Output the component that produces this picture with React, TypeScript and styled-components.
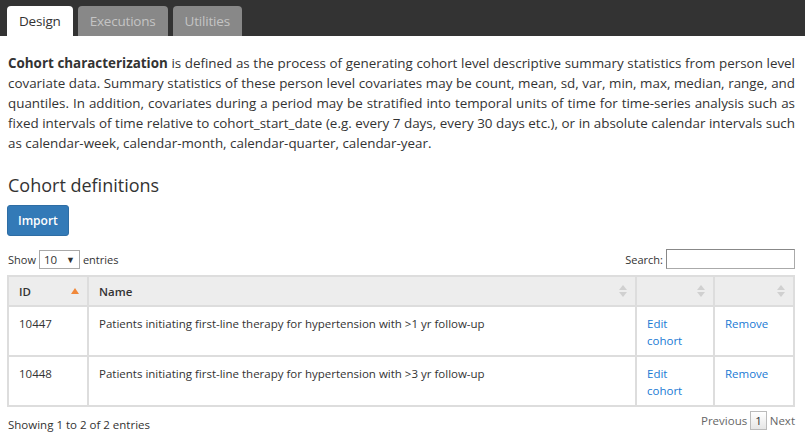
import React from 'react';
import styled, { createGlobalStyle } from 'styled-components';

const Global = createGlobalStyle`
  body {
    margin: 0;
    font-family: "Open Sans", "Noto Sans", sans-serif;
    color: #333;
    background: #fff;
  }
`

const TabBar = styled.div`
  background: #333;
  height: 36px;
  display: flex;
  align-items: flex-end;
  gap: 5px;
  padding-left: 7px;
`

const Tab = styled.div<{ $active?: boolean }>`
  height: 30px;
  padding: 0 12px;
  display: flex;
  align-items: center;
  border-radius: 4px 4px 0 0;
  font-size: 13.5px;
  letter-spacing: -0.2px;
  background: ${p => (p.$active ? '#fff' : '#888')};
  color: ${p => (p.$active ? '#333' : '#c4c4c4')};
`

const Content = styled.div`
  padding: 0 10px 0 8px;
`

const Intro = styled.p`
  margin: 17px 0 0;
  font-size: 13.4px;
  line-height: 20px;
  text-align: justify;
  color: #333;
`

const Heading = styled.h3`
  margin: 21px 0 9px;
  font-size: 18px;
  font-weight: 400;
  line-height: 22px;
`

const ImportButton = styled.button`
  font-family: inherit;
  background: #337ab7;
  border: 1px solid #2e6da4;
  color: #fff;
  font-size: 12px;
  font-weight: 600;
  height: 31px;
  padding: 0 10px;
  border-radius: 3px;
  margin-left: -1px;
`

const Controls = styled.div`
  display: flex;
  justify-content: space-between;
  align-items: center;
  margin-top: 13px;
  font-size: 11px;
`

const Inline = styled.label`
  display: flex;
  align-items: center;
  gap: 3px;
`

const FakeSelect = styled.div`
  width: 41px;
  height: 19px;
  border: 1px solid #a9a9a9;
  display: flex;
  align-items: center;
  justify-content: space-between;
  padding: 0 4px;
  box-sizing: border-box;
  font-size: 11.5px;

  span:last-child {
    font-size: 9px;
  }
`

const SearchBox = styled.div`
  width: 129px;
  height: 20px;
  box-sizing: border-box;
  border: 1px solid #aaa;
  border-top-color: #888;
  border-left-color: #888;
`

const Table = styled.table`
  width: calc(100% + 1px);
  table-layout: fixed;
  border-collapse: collapse;
  margin-top: 6px;
  font-size: 11.5px;
  border: 2px solid #ddd;
  margin-left: -1px;

  th, td {
    border: 2px solid #ddd;
    text-align: left;
    vertical-align: top;
  }
`

const Th = styled.th`
  position: relative;
  background: #ededed;
  font-weight: 600;
  height: 28px;
  padding: 0 10px;
  vertical-align: middle !important;
`

const Td = styled.td`
  height: 50px;
  padding: 8px 10px 0;
  line-height: 17px;
  box-sizing: border-box;
`

const Link = styled.a`
  color: #1a7ad4;
  text-decoration: none;
`

const SortIcon = styled.span`
  position: absolute;
  right: 8px;
  top: 50%;
  transform: translateY(-50%);
  display: flex;
`

const Footer = styled.div`
  display: flex;
  justify-content: space-between;
  align-items: center;
  font-size: 11.5px;
  margin-top: 10px;
`

const Pager = styled.div`
  display: flex;
  align-items: center;
  gap: 3px;
  color: #666;
  margin-top: -9px;
`

const PageNum = styled.span`
  border: 1px solid #bbb;
  background: linear-gradient(#fff, #e6e6e6);
  padding: 0 4px;
  line-height: 17px;
  color: #333;
`

const Sort = ({ active }: { active?: boolean }) => (
  <SortIcon>
    {active ? (
      <svg width="8" height="8" viewBox="0 0 8 8">
        <path d="M0 7 L4 1 L8 7 Z" fill="#f0883a" />
      </svg>
    ) : (
      <svg width="8" height="14" viewBox="0 0 8 14">
        <path d="M0 6 L4 1 L8 6 Z" fill="#d0d0d0" />
        <path d="M0 8 L4 13 L8 8 Z" fill="#d0d0d0" />
      </svg>
    )}
  </SortIcon>
)

type Row = { id: number; name: string }

const rows: Row[] = [
  { id: 10447, name: 'Patients initiating first-line therapy for hypertension with >1 yr follow-up' },
  { id: 10448, name: 'Patients initiating first-line therapy for hypertension with >3 yr follow-up' },
]

const App: React.FC = () => {
  return (
    <React.Fragment>
      <Global />
      <TabBar>
        <Tab $active>Design</Tab>
        <Tab>Executions</Tab>
        <Tab>Utilities</Tab>
      </TabBar>
      <Content>
        <Intro>
          <b>Cohort characterization</b> is defined as the process of generating cohort level descriptive summary
          statistics from person level covariate data. Summary statistics of these person level covariates may be
          count, mean, sd, var, min, max, median, range, and quantiles. In addition, covariates during a period may
          be stratified into temporal units of time for time-series analysis such as fixed intervals of time relative
          to cohort_start_date (e.g. every 7 days, every 30 days etc.), or in absolute calendar intervals such as
          calendar-week, calendar-month, calendar-quarter, calendar-year.
        </Intro>
        <Heading>Cohort definitions</Heading>
        <ImportButton>Import</ImportButton>
        <Controls>
          <Inline>
            Show
            <FakeSelect>
              <span>10</span>
              <span>▼</span>
            </FakeSelect>
            entries
          </Inline>
          <Inline>
            Search:
            <SearchBox />
          </Inline>
        </Controls>
        <Table>
          <colgroup>
            <col style={{ width: 80 }} />
            <col />
            <col style={{ width: 78 }} />
            <col style={{ width: 80 }} />
          </colgroup>
          <thead>
            <tr>
              <Th>ID<Sort active /></Th>
              <Th>Name<Sort /></Th>
              <Th><Sort /></Th>
              <Th><Sort /></Th>
            </tr>
          </thead>
          <tbody>
            {rows.map(r => (
              <tr key={r.id}>
                <Td>{r.id}</Td>
                <Td>{r.name}</Td>
                <Td><Link href="#">Edit<br />cohort</Link></Td>
                <Td><Link href="#">Remove</Link></Td>
              </tr>
            ))}
          </tbody>
        </Table>
        <Footer>
          <span>Showing 1 to 2 of 2 entries</span>
          <Pager>
            <span>Previous</span>
            <PageNum>1</PageNum>
            <span>Next</span>
          </Pager>
        </Footer>
      </Content>
    </React.Fragment>
  );
}

export default App;
